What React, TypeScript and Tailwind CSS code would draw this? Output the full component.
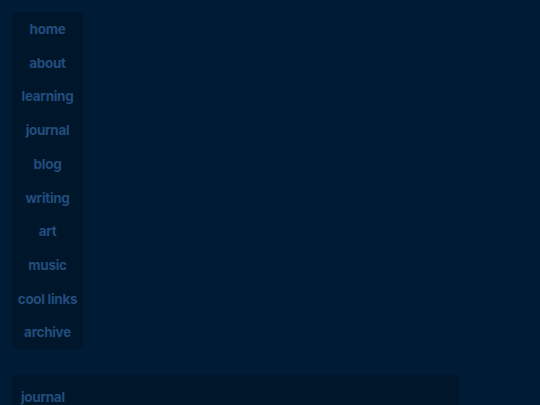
import React from 'react';

const links = ['home', 'about', 'learning', 'journal', 'blog', 'writing', 'art', 'music', 'cool links', 'archive'];

export default function App() {
  return (
    <div className="h-screen overflow-hidden bg-[#001b35] p-3 font-['Inter',sans-serif] font-bold text-[#224d7d]">
      <div className="flex flex-col items-start gap-[26px]">
        <nav className="flex w-[71px] flex-col bg-[#00162b]">
          {links.map((l) => (
            <a key={l} className="block pt-[9px] pb-[7px] text-center text-[13.5px] leading-[17.7px] tracking-[-0.3px]">
              {l}
            </a>
          ))}
        </nav>
        <section className="w-[447px] bg-[#00162b] px-[9px] pt-[14px] pb-6">
          <h2 className="text-[13.5px] leading-[17px] tracking-[-0.3px]">journal</h2>
        </section>
      </div>
    </div>
  );
}
